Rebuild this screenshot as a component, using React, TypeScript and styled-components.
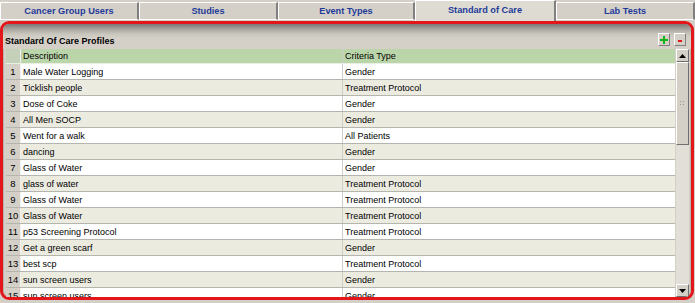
import React from "react";
import styled, { createGlobalStyle } from "styled-components";

const Global = createGlobalStyle`
  html, body { margin: 0; padding: 0; background: #d4d0c8; overflow: hidden; }
  body { font-family: "Liberation Sans", Arial, sans-serif; }
`;

const Page = styled.div`
  width: 695px;
  height: 303px;
  background: #d4d0c8;
  display: flex;
  flex-direction: column;
`;

const TabStrip = styled.div`
  display: flex;
  height: 21px;
  align-items: flex-start;
`;

const Tab = styled.div<{ $active?: boolean; $w: number }>`
  box-sizing: border-box;
  width: ${(p) => p.$w}px;
  height: ${(p) => (p.$active ? 21 : 18)}px;
  margin-top: ${(p) => (p.$active ? 0 : 2)}px;
  background: ${(p) => (p.$active ? "#dedbd3" : "#d4d0c8")};
  border-top: 1px solid #ffffff;
  border-left: 1px solid #ffffff;
  border-right: 2px solid #808080;
  border-bottom: ${(p) => (p.$active ? "none" : "1px solid #ffffff")};
  display: flex;
  align-items: center;
  justify-content: center;
  padding-bottom: ${(p) => (p.$active ? 3 : 1)}px;
  font-weight: bold;
  font-size: 9.2px;
  color: #1f3b98;
`;

const Panel = styled.div`
  box-sizing: border-box;
  width: 694px;
  height: 279px;
  border: 3px solid #e3161c;
  border-radius: 9px;
  background: #d4d0c8;
  display: flex;
  flex-direction: column;
  overflow: hidden;
  box-shadow: inset 0 0 0 1px #b8b4ac;
`;

const PanelHeader = styled.div`
  height: 23px;
  flex: none;
  background: linear-gradient(#7a7874 0px, #a6a39d 5px, #c9c6be 10px, #d4d0c8 14px);
  display: flex;
  align-items: flex-end;
  padding: 0 5px 2px 2px;
`;

const Title = styled.div`
  font-weight: bold;
  font-size: 9px;
  color: #000;
  flex: 1;
  line-height: 11px;
`;

const HeaderButtons = styled.div`
  display: flex;
  gap: 4px;
  margin-bottom: 1px;
`;

const IconButton = styled.div`
  box-sizing: border-box;
  width: 12px;
  height: 13px;
  background: #d4d0c8;
  border-top: 1px solid #ffffff;
  border-left: 1px solid #ffffff;
  border-right: 1px solid #808080;
  border-bottom: 1px solid #808080;
  display: flex;
  align-items: center;
  justify-content: center;
`;

const Body = styled.div`
  flex: 1;
  display: flex;
  padding: 0 2px 0 3px;
  min-height: 0;
`;

const Grid = styled.div`
  width: 670px;
  overflow: hidden;
  display: flex;
  flex-direction: column;
`;

const Row = styled.div<{ $alt?: boolean; $header?: boolean }>`
  display: grid;
  grid-template-columns: 15px 322px 1fr;
  flex: none;
  height: ${(p) => (p.$header ? 15 : 16)}px;
  box-sizing: border-box;
  border-bottom: ${(p) => (p.$header ? "1px solid #e9efe3" : "1px solid #b5b5b0")};
  background: ${(p) => (p.$header ? "#bbd5aa" : p.$alt ? "#ecebe0" : "#ffffff")};
  font-size: 9px;
  color: #000;
`;

const NumCell = styled.div<{ $header?: boolean }>`
  background: ${(p) => (p.$header ? "#c5d0bb" : "#d4d0c8")};
  border-right: 1px solid #f2f0ea;
  display: flex;
  align-items: center;
  justify-content: center;
  font-size: 9.5px;
`;

const Cell = styled.div<{ $last?: boolean }>`
  display: flex;
  align-items: center;
  padding-left: 2px;
  border-right: ${(p) => (p.$last ? "none" : "1px solid #cfcfca")};
  white-space: nowrap;
  overflow: hidden;
`;

const Scrollbar = styled.div`
  width: 13px;
  margin-left: 1px;
  display: flex;
  flex-direction: column;
  background: #e2dfd8;
`;

const ArrowButton = styled.div`
  box-sizing: border-box;
  height: 13px;
  flex: none;
  background: #d4d0c8;
  border-top: 1px solid #ffffff;
  border-left: 1px solid #ffffff;
  border-right: 1px solid #6f6f6f;
  border-bottom: 1px solid #6f6f6f;
  display: flex;
  align-items: center;
  justify-content: center;
`;

const Thumb = styled.div`
  box-sizing: border-box;
  height: 83px;
  flex: none;
  background: #d4d0c8;
  border-top: 1px solid #ffffff;
  border-left: 1px solid #ffffff;
  border-right: 1px solid #6f6f6f;
  border-bottom: 1px solid #6f6f6f;
  display: flex;
  align-items: center;
  justify-content: center;
`;

const Track = styled.div`
  flex: 1;
`;

const rows: [string, string][] = [
  ["Male Water Logging", "Gender"],
  ["Ticklish people", "Treatment Protocol"],
  ["Dose of Coke", "Gender"],
  ["All Men SOCP", "Gender"],
  ["Went for a walk", "All Patients"],
  ["dancing", "Gender"],
  ["Glass of Water", "Gender"],
  ["glass of water", "Treatment Protocol"],
  ["Glass of Water", "Treatment Protocol"],
  ["Glass of Water", "Treatment Protocol"],
  ["p53 Screening Protocol", "Treatment Protocol"],
  ["Get a green scarf", "Gender"],
  ["best scp", "Treatment Protocol"],
  ["sun screen users", "Gender"],
  ["sun screen users", "Gender"],
];

const tabs = [
  { label: "Cancer Group Users", w: 139 },
  { label: "Studies", w: 139 },
  { label: "Event Types", w: 137 },
  { label: "Standard of Care", w: 141, active: true },
  { label: "Lab Tests", w: 139 },
];

export default function App() {
  return (
    <Page>
      <Global />
      <TabStrip>
        {tabs.map((t) => (
          <Tab key={t.label} $w={t.w} $active={t.active}>
            {t.label}
          </Tab>
        ))}
      </TabStrip>
      <Panel>
        <PanelHeader>
          <Title>Standard Of Care Profiles</Title>
          <HeaderButtons>
            <IconButton>
              <svg width="8" height="8" viewBox="0 0 8 8">
                <rect x="3" y="0" width="2" height="8" fill="#13b313" />
                <rect x="0" y="3" width="8" height="2" fill="#13b313" />
              </svg>
            </IconButton>
            <IconButton>
              <svg width="6" height="6" viewBox="0 0 6 6">
                <rect x="1" y="3" width="4" height="2" fill="#e8141c" />
              </svg>
            </IconButton>
          </HeaderButtons>
        </PanelHeader>
        <Body>
          <Grid>
            <Row $header>
              <NumCell $header />
              <Cell>Description</Cell>
              <Cell $last>Criteria Type</Cell>
            </Row>
            {rows.map((r, i) => (
              <Row key={i} $alt={i % 2 === 1}>
                <NumCell>{i + 1}</NumCell>
                <Cell>{r[0]}</Cell>
                <Cell $last>{r[1]}</Cell>
              </Row>
            ))}
          </Grid>
          <Scrollbar>
            <ArrowButton>
              <svg width="7" height="4" viewBox="0 0 7 4">
                <polygon points="3.5,0 7,4 0,4" fill="#000" />
              </svg>
            </ArrowButton>
            <Thumb>
              <svg width="5" height="5" viewBox="0 0 5 5">
                <rect x="0" y="0" width="1" height="1" fill="#999" />
                <rect x="3" y="0" width="1" height="1" fill="#999" />
                <rect x="0" y="3" width="1" height="1" fill="#999" />
                <rect x="3" y="3" width="1" height="1" fill="#999" />
              </svg>
            </Thumb>
            <Track />
            <ArrowButton>
              <svg width="7" height="4" viewBox="0 0 7 4">
                <polygon points="0,0 7,0 3.5,4" fill="#000" />
              </svg>
            </ArrowButton>
          </Scrollbar>
        </Body>
      </Panel>
    </Page>
  );
}
